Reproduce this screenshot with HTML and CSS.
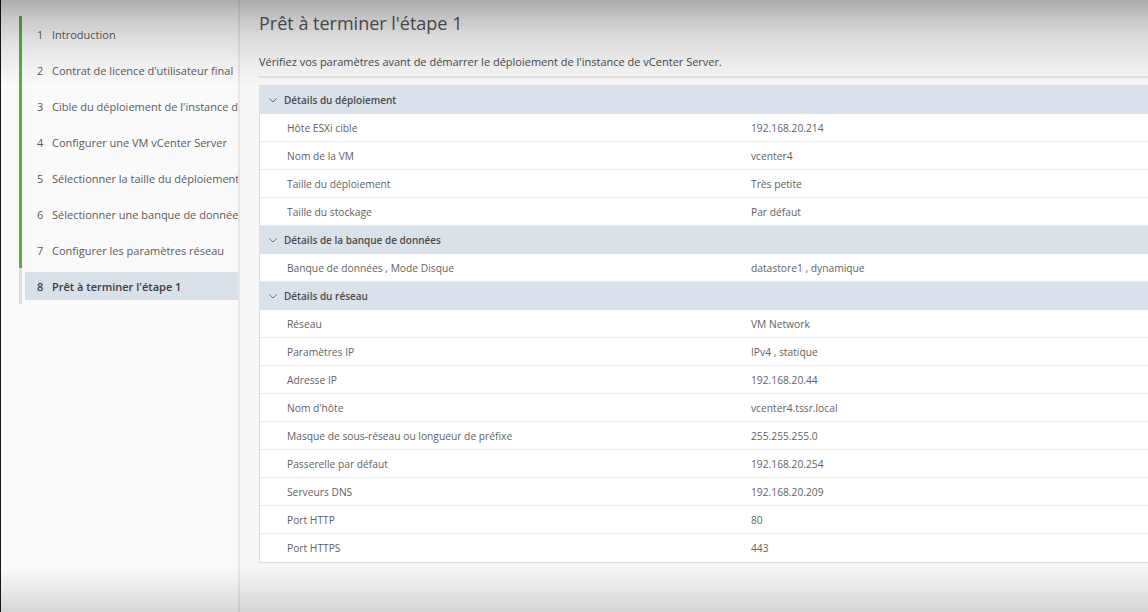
FILE: index.html
```html
<!DOCTYPE html>
<html lang="fr">
<head>
<meta charset="utf-8">
<title>Prêt à terminer l'étape 1</title>
<link rel="stylesheet" href="styles.css">
</head>
<body>
<div class="app">
  <nav class="sidebar">
    <ol class="steps">
      <li class="step done"><span class="num">1</span><span class="lbl">Introduction</span></li>
      <li class="step done"><span class="num">2</span><span class="lbl">Contrat de licence d'utilisateur final</span></li>
      <li class="step done"><span class="num">3</span><span class="lbl">Cible du déploiement de l'instance de vCenter Server</span></li>
      <li class="step done"><span class="num">4</span><span class="lbl">Configurer une VM vCenter Server</span></li>
      <li class="step done"><span class="num">5</span><span class="lbl">Sélectionner la taille du déploiement</span></li>
      <li class="step done"><span class="num">6</span><span class="lbl">Sélectionner une banque de données</span></li>
      <li class="step done"><span class="num">7</span><span class="lbl">Configurer les paramètres réseau</span></li>
      <li class="step current"><div class="step-inner"><span class="num">8</span><span class="lbl">Prêt à terminer l'étape 1</span></div></li>
    </ol>
  </nav>
  <main class="main">
    <h1 class="title">Prêt à terminer l'étape 1</h1>
    <p class="subtitle">Vérifiez vos paramètres avant de démarrer le déploiement de l'instance de vCenter Server.</p>
    <div class="rule"></div>
    <div class="summary">
      <div class="section-head"><svg class="chev" width="8" height="5" viewBox="0 0 8 5"><path d="M0.5 0.5 L4 4 L7.5 0.5" fill="none" stroke="#6b6b6b" stroke-width="1"/></svg><span>Détails du déploiement</span></div>
      <div class="row"><span class="k">Hôte ESXi cible</span><span class="v">192.168.20.214</span></div>
      <div class="row"><span class="k">Nom de la VM</span><span class="v">vcenter4</span></div>
      <div class="row"><span class="k">Taille du déploiement</span><span class="v">Très petite</span></div>
      <div class="row"><span class="k">Taille du stockage</span><span class="v">Par défaut</span></div>
      <div class="section-head"><svg class="chev" width="8" height="5" viewBox="0 0 8 5"><path d="M0.5 0.5 L4 4 L7.5 0.5" fill="none" stroke="#6b6b6b" stroke-width="1"/></svg><span>Détails de la banque de données</span></div>
      <div class="row"><span class="k">Banque de données , Mode Disque</span><span class="v">datastore1 , dynamique</span></div>
      <div class="section-head"><svg class="chev" width="8" height="5" viewBox="0 0 8 5"><path d="M0.5 0.5 L4 4 L7.5 0.5" fill="none" stroke="#6b6b6b" stroke-width="1"/></svg><span>Détails du réseau</span></div>
      <div class="row"><span class="k">Réseau</span><span class="v">VM Network</span></div>
      <div class="row"><span class="k">Paramètres IP</span><span class="v">IPv4 , statique</span></div>
      <div class="row"><span class="k">Adresse IP</span><span class="v">192.168.20.44</span></div>
      <div class="row"><span class="k">Nom d'hôte</span><span class="v">vcenter4.tssr.local</span></div>
      <div class="row"><span class="k">Masque de sous-réseau ou longueur de préfixe</span><span class="v">255.255.255.0</span></div>
      <div class="row"><span class="k">Passerelle par défaut</span><span class="v">192.168.20.254</span></div>
      <div class="row"><span class="k">Serveurs DNS</span><span class="v">192.168.20.209</span></div>
      <div class="row"><span class="k">Port HTTP</span><span class="v">80</span></div>
      <div class="row last"><span class="k">Port HTTPS</span><span class="v">443</span></div>
    </div>
  </main>
</div>
<div class="vignette"></div>
</body>
</html>
```

FILE: styles.css
```css
html, body {
  margin: 0;
  padding: 0;
  height: 100%;
}
*, *::before, *::after {
  box-sizing: border-box;
}
body {
  font-family: "Open Sans", "Noto Sans", "Liberation Sans", sans-serif;
  background: #f7f7f7;
  color: #565656;
  overflow: hidden;
}
.app {
  display: flex;
  height: 612px;
}
.sidebar {
  width: 240px;
  flex: none;
  background: #fafafa;
  border-left: 1px solid #1a1a1a;
  border-right: 2px solid #e6e6e6;
  overflow: hidden;
}
.steps {
  list-style: none;
  margin: 16px 0 0 18px;
  padding: 0;
}
.step {
  border-left: 3px solid #5fae3c;
  height: 36px;
  display: flex;
  align-items: center;
  padding-left: 15px;
  font-size: 11px;
  white-space: nowrap;
  color: #5a5a5a;
}
.step .num {
  width: 15px;
  flex: none;
}
.step.current {
  border-left-color: #dedede;
  padding: 4px 0 4px 3px;
  align-items: stretch;
}
.step-inner {
  flex: 1;
  display: flex;
  align-items: center;
  background: #d8e1e9;
  padding-left: 12px;
  font-weight: 600;
  color: #3c3c3c;
}
.main {
  flex: 1;
  min-width: 0;
  padding-left: 19px;
  overflow: hidden;
}
.title {
  margin: 10px 0 0;
  font-size: 18px;
  font-weight: 400;
  line-height: 26px;
  color: #555;
}
.subtitle {
  margin: 18px 0 0;
  font-size: 11px;
  line-height: 16px;
  color: #4a4a4a;
}
.rule {
  margin-top: 6px;
  height: 2px;
  background: #e3e3e3;
}
.summary {
  margin-top: 7px;
  width: 920px;
  background: #fff;
  border: 1px solid #dcdcdc;
  border-right: none;
}
.section-head {
  height: 28px;
  display: flex;
  align-items: center;
  padding-left: 9px;
  background: #d9e2ea;
  font-size: 10px;
  font-weight: 600;
  color: #4a4a4a;
}
.chev {
  margin-right: 7px;
  flex: none;
}
.row {
  height: 28px;
  display: flex;
  align-items: center;
  border-bottom: 1px solid #ececec;
  padding-left: 27px;
  font-size: 10.25px;
  color: #636363;
}
.row.last {
  border-bottom: none;
}
.row .k {
  width: 464px;
  flex: none;
}
.vignette {
  position: fixed;
  inset: 0;
  pointer-events: none;
  background: linear-gradient(to bottom,
    rgba(0,0,0,0.31) 0px,
    rgba(0,0,0,0.2) 18px,
    rgba(0,0,0,0.1) 40px,
    rgba(0,0,0,0.035) 68px,
    rgba(0,0,0,0) 86px,
    rgba(0,0,0,0) 566px,
    rgba(0,0,0,0.05) 585px,
    rgba(0,0,0,0.14) 612px);
}
```
